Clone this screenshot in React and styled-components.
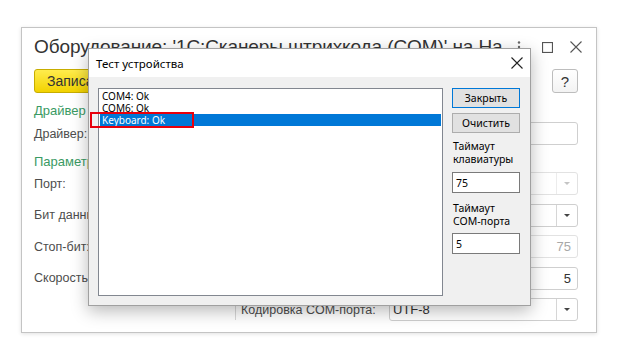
import React from "react";
import styled, { createGlobalStyle } from "styled-components";

const GlobalStyle = createGlobalStyle`
  html, body {
    margin: 0;
    padding: 0;
    background: #fff;
  }
  body {
    font-family: "Liberation Sans", Arial, sans-serif;
  }
`;

const Page = styled.div`
  position: relative;
  width: 625px;
  height: 354px;
  padding: 27px 0 0 21px;
  box-sizing: border-box;
  overflow: hidden;
`;

const Window = styled.div`
  width: 576px;
  height: 306px;
  box-sizing: border-box;
  border: 1px solid #c4c4c4;
  box-shadow: 0 1px 4px rgba(0, 0, 0, 0.12);
  background: #fff;
  padding: 6px 18px 0 12px;
  display: flex;
  flex-direction: column;
`;

const TitleRow = styled.div`
  display: flex;
  align-items: center;
  height: 26px;
`;

const Title = styled.div`
  width: 478px;
  overflow: hidden;
  white-space: nowrap;
  font-size: 19px;
  line-height: 26px;
  color: #333;
  letter-spacing: -0.1px;
`;

const TitleIcons = styled.div`
  display: flex;
  align-items: center;
  margin-left: auto;
  margin-right: -4px;
`;

const IconSlot = styled.div`
  display: flex;
  align-items: center;
  margin-left: ${(p) => p.$ml || 0}px;
`;

const Toolbar = styled.div`
  display: flex;
  align-items: center;
  height: 24px;
  margin-top: 9px;
`;

const PrimaryButton = styled.div`
  height: 24px;
  box-sizing: border-box;
  padding: 0 12px;
  display: flex;
  align-items: center;
  border: 1px solid #c7ad00;
  border-radius: 3px;
  background: linear-gradient(#ffec4d, #f2d200);
  font-size: 14px;
  color: #333;
`;

const HelpButton = styled.div`
  margin-left: auto;
  width: 26px;
  height: 24px;
  box-sizing: border-box;
  border: 1px solid #bdbdbd;
  border-radius: 3px;
  background: linear-gradient(#fff, #f3f3f3);
  display: flex;
  align-items: center;
  justify-content: center;
  font-size: 15px;
  color: #333;
`;

const GroupTitle = styled.div`
  margin-top: ${(p) => p.$mt}px;
  font-size: 13px;
  line-height: 18px;
  color: #3a9a63;
`;

const FormRow = styled.div`
  display: flex;
  align-items: center;
  height: 23px;
  margin-top: ${(p) => p.$mt}px;
`;

const Label = styled.div`
  width: ${(p) => p.$w || 110}px;
  flex-shrink: 0;
  font-size: 12.5px;
  color: #4d4d4d;
  white-space: nowrap;
`;

const Field = styled.div`
  flex: 1;
  height: 23px;
  box-sizing: border-box;
  border: 1px solid ${(p) => (p.$disabled ? "#e2e2e2" : "#cfcfcf")};
  border-radius: 3px;
  background: #fff;
  display: flex;
  align-items: center;
  font-size: 13px;
  color: ${(p) => (p.$disabled ? "#a8a8a8" : "#333")};
`;

const FieldValue = styled.div`
  flex: 1;
  padding: 0 6px 0 3px;
  text-align: ${(p) => (p.$right ? "right" : "left")};
`;

const DropButton = styled.div`
  width: 20px;
  height: 100%;
  border-left: 1px solid ${(p) => (p.$disabled ? "#ececec" : "#d6d6d6")};
  display: flex;
  align-items: center;
  justify-content: center;
  &::after {
    content: "";
    border-left: 3px solid transparent;
    border-right: 3px solid transparent;
    border-top: 3px solid ${(p) => (p.$disabled ? "#c4c4c4" : "#444")};
  }
`;

const Spacer = styled.div`
  width: 201px;
  flex-shrink: 0;
`;

const Separator = styled.div`
  width: 1px;
  height: 14px;
  margin-top: 6px;
  background: #d8d8d8;
  margin-right: 5px;
`;

const Dialog = styled.div`
  position: absolute;
  left: 88px;
  top: 48px;
  width: 443px;
  height: 258px;
  box-sizing: border-box;
  border: 1px solid #a0a0a0;
  background: #f0f0f0;
  box-shadow: 0 5px 16px rgba(0, 0, 0, 0.28);
  display: flex;
  flex-direction: column;
  font-family: "Noto Sans", "Open Sans", sans-serif;
`;

const DialogHeader = styled.div`
  height: 28px;
  background: #fff;
  display: flex;
  align-items: center;
  padding: 0 7px;
  font-size: 11.5px;
  color: #000;
`;

const DialogClose = styled.div`
  margin-left: auto;
  display: flex;
  align-items: center;
`;

const DialogBody = styled.div`
  flex: 1;
  display: flex;
  padding: 11px 10px 9px 9px;
  gap: 9px;
  position: relative;
`;

const ListBox = styled.div`
  width: 345px;
  height: 208px;
  box-sizing: border-box;
  border: 1px solid #828790;
  background: #fff;
  padding: 1px;
`;

const ListItem = styled.div`
  height: 12px;
  line-height: 12px;
  font-size: 10px;
  padding-left: 2px;
  color: ${(p) => (p.$selected ? "#fff" : "#000")};
  background: ${(p) => (p.$selected ? "#0078d7" : "transparent")};
`;

const Highlight = styled.div`
  position: absolute;
  left: 1px;
  top: 35px;
  width: 104px;
  height: 16px;
  box-sizing: border-box;
  border: 2.5px solid #e8000b;
`;

const SideColumn = styled.div`
  width: 68px;
  display: flex;
  flex-direction: column;
`;

const DialogButton = styled.div`
  height: 20px;
  box-sizing: border-box;
  border: 1px solid ${(p) => (p.$default ? "#0078d7" : "#adadad")};
  background: #e1e1e1;
  display: flex;
  align-items: center;
  justify-content: center;
  font-size: 10.5px;
  color: #000;
  margin-bottom: 5px;
`;

const SideLabel = styled.div`
  font-size: 10.5px;
  line-height: 12.5px;
  color: #000;
  margin: ${(p) => p.$mt}px 0 0 1px;
`;

const SideInput = styled.div`
  height: 21px;
  box-sizing: border-box;
  border: 1px solid #7a7a7a;
  background: #fff;
  display: flex;
  align-items: center;
  padding-left: 3px;
  font-size: 10.5px;
  color: #000;
  margin-top: ${(p) => p.$mt}px;
`;

const DotsIcon = () => (
  <svg width="4" height="12" viewBox="0 0 4 12">
    <circle cx="2" cy="1.5" r="1.2" fill="#666" />
    <circle cx="2" cy="6" r="1.2" fill="#666" />
    <circle cx="2" cy="10.5" r="1.2" fill="#666" />
  </svg>
);

const MaxIcon = () => (
  <svg width="11" height="11" viewBox="0 0 11 11">
    <rect x="0.5" y="0.5" width="10" height="10" fill="none" stroke="#555" strokeWidth="1.2" />
  </svg>
);

const CloseIcon = ({ size = 12, color = "#555" }) => (
  <svg width={size} height={size} viewBox="0 0 12 12">
    <path d="M0.5 0.5 L11.5 11.5 M11.5 0.5 L0.5 11.5" stroke={color} strokeWidth="1.1" />
  </svg>
);

const App = () => {
  return (
    <Page>
      <GlobalStyle />
      <Window>
        <TitleRow>
          <Title>Оборудование: '1С:Сканеры штрихкода (COM)' на На</Title>
          <TitleIcons>
            <IconSlot>
              <DotsIcon />
            </IconSlot>
            <IconSlot $ml={21}>
              <MaxIcon />
            </IconSlot>
            <IconSlot $ml={17}>
              <CloseIcon />
            </IconSlot>
          </TitleIcons>
        </TitleRow>
        <Toolbar>
          <PrimaryButton>Записать и закрыть</PrimaryButton>
          <HelpButton>?</HelpButton>
        </Toolbar>
        <GroupTitle $mt={9}>Драйвер и подключение</GroupTitle>
        <FormRow $mt={2}>
          <Label>Драйвер:</Label>
          <Field>
            <FieldValue>1С:Сканеры штрихкода (COM)</FieldValue>
          </Field>
        </FormRow>
        <GroupTitle $mt={8}>Параметры</GroupTitle>
        <FormRow $mt={1}>
          <Label>Порт:</Label>
          <Field $disabled>
            <FieldValue>Keyboard</FieldValue>
            <DropButton $disabled />
          </Field>
        </FormRow>
        <FormRow $mt={8.5}>
          <Label>Бит данных:</Label>
          <Field>
            <FieldValue>8</FieldValue>
            <DropButton />
          </Field>
        </FormRow>
        <FormRow $mt={8.5}>
          <Label>Стоп-бит:</Label>
          <Field $disabled>
            <FieldValue $right>75</FieldValue>
          </Field>
        </FormRow>
        <FormRow $mt={8.5}>
          <Label>Скорость:</Label>
          <Field>
            <FieldValue $right>5</FieldValue>
          </Field>
        </FormRow>
        <FormRow $mt={8.5}>
          <Spacer />
          <Separator />
          <Label $w={148}>Кодировка COM-порта:</Label>
          <Field>
            <FieldValue>UTF-8</FieldValue>
            <DropButton />
          </Field>
        </FormRow>
      </Window>

      <Dialog>
        <DialogHeader>
          Тест устройства
          <DialogClose>
            <CloseIcon size={12} color="#222" />
          </DialogClose>
        </DialogHeader>
        <DialogBody>
          <ListBox>
            <ListItem>COM4: Ok</ListItem>
            <ListItem>COM6: Ok</ListItem>
            <ListItem $selected>Keyboard: Ok</ListItem>
          </ListBox>
          <Highlight />
          <SideColumn>
            <DialogButton $default>Закрыть</DialogButton>
            <DialogButton>Очистить</DialogButton>
            <SideLabel $mt={2}>
              Таймаут
              <br />
              клавиатуры
            </SideLabel>
            <SideInput $mt={7}>75</SideInput>
            <SideLabel $mt={9}>
              Таймаут
              <br />
              COM-порта
            </SideLabel>
            <SideInput $mt={6}>5</SideInput>
          </SideColumn>
        </DialogBody>
      </Dialog>
    </Page>
  );
};

export default App;
